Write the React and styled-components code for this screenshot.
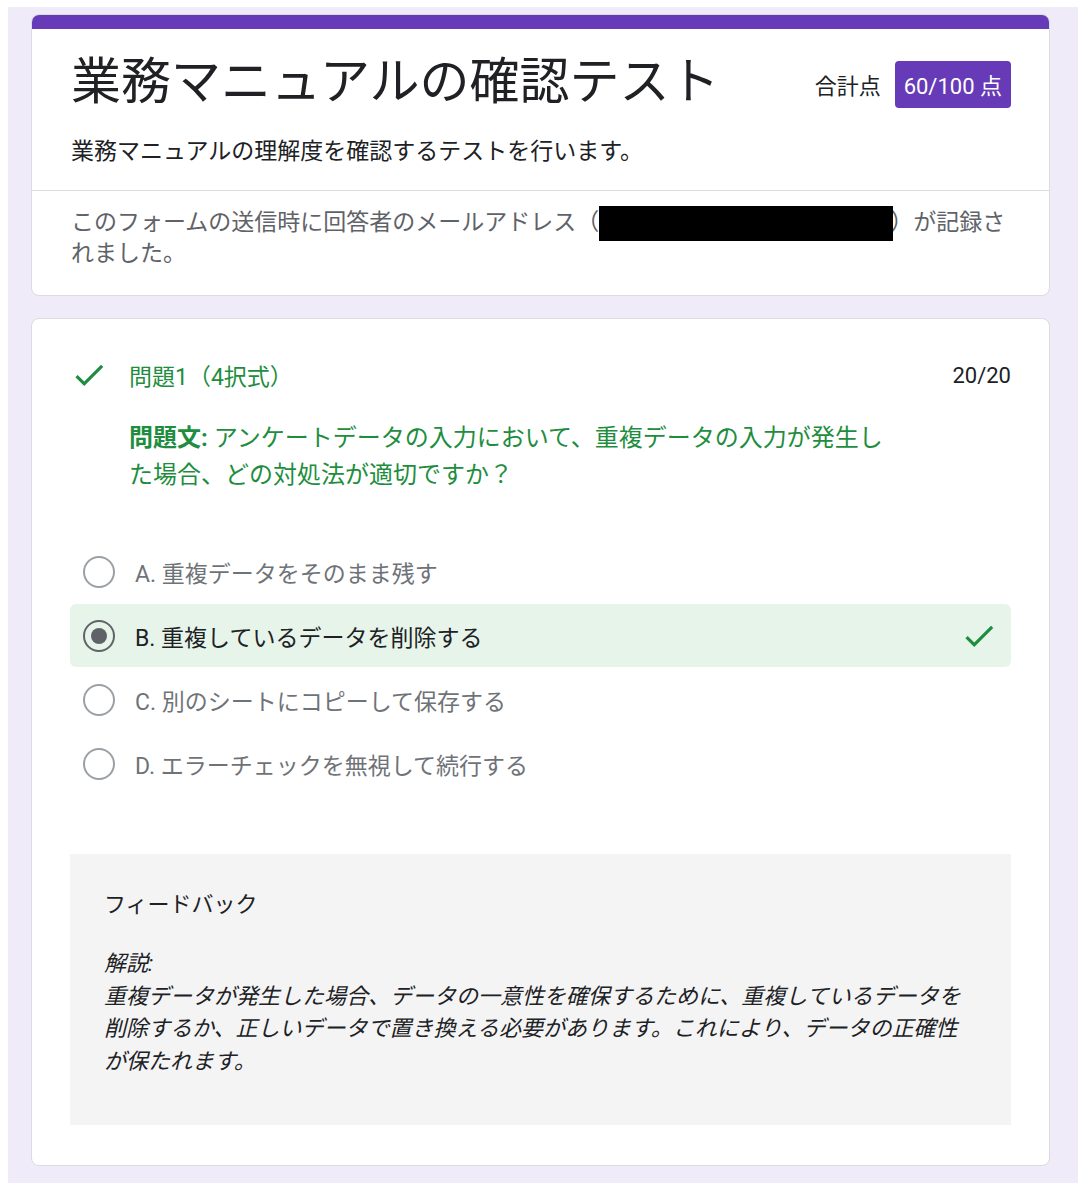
import styled, { createGlobalStyle } from 'styled-components';

const GlobalStyle = createGlobalStyle`
  body {
    margin: 0;
    background: #fff;
    font-family: Roboto, "Noto Sans CJK JP", sans-serif;
    color: #202124;
  }
`;

const Page = styled.div`
  margin: 7px 10px 12px 8px;
  padding: 7px 28px 17px 23px;
  background-color: #f0ebf8;
  display: flex;
  flex-direction: column;
  gap: 22px;
`;

const Card = styled.section`
  background-color: #fff;
  border: 1px solid #dadce0;
  border-radius: 8px;
  overflow: hidden;
`;

const Band = styled.div`
  height: 15px;
  background-color: #673ab7;
  margin: -1px -1px 0;
`;

const HeaderBlock = styled.div`
  padding: 22px 38px 22px 39px;
  border-bottom: 1px solid #dadce0;
`;

const TitleRow = styled.div`
  display: flex;
  justify-content: space-between;
  align-items: center;
`;

const Title = styled.h1`
  margin: 0;
  font-size: 50px;
  line-height: 62px;
  font-weight: 400;
  color: #202124;
`;

const Score = styled.div`
  display: flex;
  align-items: center;
  gap: 14px;
  font-size: 22px;
  margin-top: 4px;
`;

const Badge = styled.span`
  display: flex;
  align-items: center;
  height: 47px;
  padding: 0 9px;
  border-radius: 4px;
  background-color: #673ab7;
  color: #fff;
  font-size: 22px;
`;

const Subtitle = styled.p`
  margin: 23px 0 0;
  font-size: 23px;
  line-height: 32px;
`;

const Notice = styled.p`
  margin: 0;
  padding: 16px 38px 26px 39px;
  font-size: 23px;
  line-height: 31px;
  color: #5f6368;
`;

const Redacted = styled.span`
  display: inline-block;
  width: 294px;
  height: 35px;
  margin: -3px -3px -3px 0;
  vertical-align: middle;
  background-color: #000;
  position: relative;
`;

const QuestionCard = styled(Card)`
  padding: 40px 38px 40px 39px;
`;

const QuestionHead = styled.div`
  display: flex;
  align-items: center;
  gap: 21px;
  height: 32px;
  font-size: 23px;
`;

const QuestionLabel = styled.span`
  flex: 1;
  color: #1e8e3e;
`;

const Points = styled.span`
  font-size: 22px;
  color: #202124;
`;

const QuestionText = styled.p`
  margin: 29px 0 0;
  padding-left: 58px;
  max-width: 766px;
  font-size: 24px;
  line-height: 37px;
  color: #1e8e3e;

  strong {
    font-weight: 700;
  }
`;

const Options = styled.div`
  margin: 46px 0 0 -1px;
  display: flex;
  flex-direction: column;
  gap: 1px;
`;

const Option = styled.div`
  display: flex;
  align-items: center;
  gap: 20px;
  height: 63px;
  padding: 0 13px 0 13px;
  border-radius: 6px;
  background-color: ${(p) => (p.$selected ? '#e6f4ea' : 'transparent')};
  font-size: 23px;
  color: ${(p) => (p.$selected ? '#202124' : '#6f7378')};
`;

const Radio = styled.span`
  flex: none;
  box-sizing: border-box;
  width: 32px;
  height: 32px;
  border-radius: 50%;
  border: 2px solid ${(p) => (p.$checked ? '#5f6368' : '#9aa0a6')};
  display: flex;
  align-items: center;
  justify-content: center;

  &::after {
    content: '';
    display: ${(p) => (p.$checked ? 'block' : 'none')};
    width: 16px;
    height: 16px;
    border-radius: 50%;
    background-color: #5f6368;
  }
`;

const OptionText = styled.span`
  flex: 1;
`;

const Feedback = styled.div`
  margin: 59px 0 0 -1px;
  padding: 35px 34px 47px;
  background-color: #f4f4f4;
  color: #202124;
`;

const FeedbackTitle = styled.div`
  font-size: 22px;
  line-height: 32px;
`;

const Explanation = styled.p`
  margin: 27px 0 0;
  font-size: 22px;
  line-height: 32.5px;
  font-style: italic;
`;

const CheckIcon = ({ size = 38, color = '#1e8e3e', style }) => (
  <svg width={size} height={size} viewBox="0 0 24 24" style={style} aria-hidden="true">
    <path fill={color} d="M9 16.17 4.83 12l-1.42 1.41L9 19 21 7l-1.41-1.41z" />
  </svg>
);

const options = [
  { label: 'A. 重複データをそのまま残す' },
  { label: 'B. 重複しているデータを削除する', selected: true },
  { label: 'C. 別のシートにコピーして保存する' },
  { label: 'D. エラーチェックを無視して続行する' },
];

export default function App() {
  return (
    <>
      <GlobalStyle />
      <Page>
        <Card>
          <Band />
          <HeaderBlock>
            <TitleRow>
              <Title>業務マニュアルの確認テスト</Title>
              <Score>
                合計点
                <Badge>60/100 点</Badge>
              </Score>
            </TitleRow>
            <Subtitle>業務マニュアルの理解度を確認するテストを行います。</Subtitle>
          </HeaderBlock>
          <Notice>
            このフォームの送信時に回答者のメールアドレス（<Redacted />）が記録されました。
          </Notice>
        </Card>

        <QuestionCard>
          <QuestionHead>
            <CheckIcon style={{ marginLeft: -1 }} />
            <QuestionLabel>問題1（4択式）</QuestionLabel>
            <Points>20/20</Points>
          </QuestionHead>
          <QuestionText>
            <strong>問題文:</strong> アンケートデータの入力において、重複データの入力が発生した場合、どの対処法が適切ですか？
          </QuestionText>

          <Options>
            {options.map((o) => (
              <Option key={o.label} $selected={o.selected}>
                <Radio $checked={o.selected} />
                <OptionText>{o.label}</OptionText>
                {o.selected && <CheckIcon />}
              </Option>
            ))}
          </Options>

          <Feedback>
            <FeedbackTitle>フィードバック</FeedbackTitle>
            <Explanation>
              解説:
              <br />
              重複データが発生した場合、データの一意性を確保するために、重複しているデータを削除するか、正しいデータで置き換える必要があります。これにより、データの正確性が保たれます。
            </Explanation>
          </Feedback>
        </QuestionCard>
      </Page>
    </>
  );
}
